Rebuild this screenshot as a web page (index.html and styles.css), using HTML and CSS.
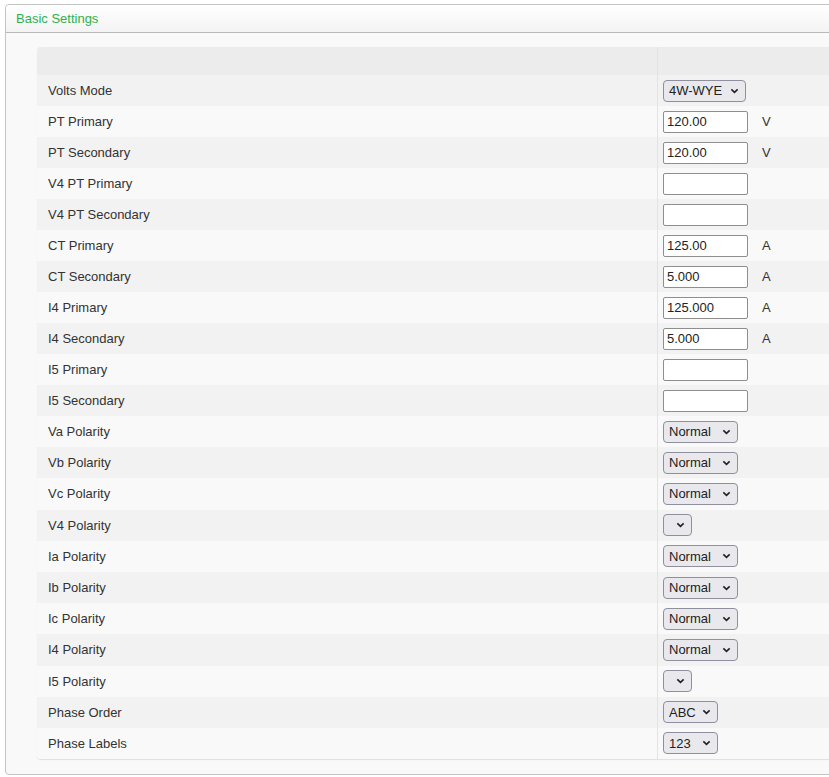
FILE: index.html
```html
<!DOCTYPE html>
<html>
<head>
<meta charset="utf-8">
<link rel="stylesheet" href="styles.css">
</head>
<body>
<div class="panel">
  <div class="panel-heading">Basic Settings</div>
  <div class="panel-body">
    <table class="settings">
      <thead><tr><th class="c1"></th><th class="c2"></th></tr></thead>
      <tbody>
        <tr><td>Volts Mode</td><td><span class="sel w83"><select><option>4W-WYE</option></select><svg viewBox="0 0 10 6"><path d="M1.5 1.2 5 4.6 8.5 1.2"/></svg></span></td></tr>
        <tr><td>PT Primary</td><td><input class="inp" value="120.00"><span class="unit">V</span></td></tr>
        <tr><td>PT Secondary</td><td><input class="inp" value="120.00"><span class="unit">V</span></td></tr>
        <tr><td>V4 PT Primary</td><td><input class="inp" value=""></td></tr>
        <tr><td>V4 PT Secondary</td><td><input class="inp" value=""></td></tr>
        <tr><td>CT Primary</td><td><input class="inp" value="125.00"><span class="unit">A</span></td></tr>
        <tr><td>CT Secondary</td><td><input class="inp" value="5.000"><span class="unit">A</span></td></tr>
        <tr><td>I4 Primary</td><td><input class="inp" value="125.000"><span class="unit">A</span></td></tr>
        <tr><td>I4 Secondary</td><td><input class="inp" value="5.000"><span class="unit">A</span></td></tr>
        <tr><td>I5 Primary</td><td><input class="inp" value=""></td></tr>
        <tr><td>I5 Secondary</td><td><input class="inp" value=""></td></tr>
        <tr><td>Va Polarity</td><td><span class="sel w75"><select><option>Normal</option></select><svg viewBox="0 0 10 6"><path d="M1.5 1.2 5 4.6 8.5 1.2"/></svg></span></td></tr>
        <tr><td>Vb Polarity</td><td><span class="sel w75"><select><option>Normal</option></select><svg viewBox="0 0 10 6"><path d="M1.5 1.2 5 4.6 8.5 1.2"/></svg></span></td></tr>
        <tr><td>Vc Polarity</td><td><span class="sel w75"><select><option>Normal</option></select><svg viewBox="0 0 10 6"><path d="M1.5 1.2 5 4.6 8.5 1.2"/></svg></span></td></tr>
        <tr><td>V4 Polarity</td><td><span class="sel w29"><select><option></option></select><svg viewBox="0 0 10 6"><path d="M1.5 1.2 5 4.6 8.5 1.2"/></svg></span></td></tr>
        <tr><td>Ia Polarity</td><td><span class="sel w75"><select><option>Normal</option></select><svg viewBox="0 0 10 6"><path d="M1.5 1.2 5 4.6 8.5 1.2"/></svg></span></td></tr>
        <tr><td>Ib Polarity</td><td><span class="sel w75"><select><option>Normal</option></select><svg viewBox="0 0 10 6"><path d="M1.5 1.2 5 4.6 8.5 1.2"/></svg></span></td></tr>
        <tr><td>Ic Polarity</td><td><span class="sel w75"><select><option>Normal</option></select><svg viewBox="0 0 10 6"><path d="M1.5 1.2 5 4.6 8.5 1.2"/></svg></span></td></tr>
        <tr><td>I4 Polarity</td><td><span class="sel w75"><select><option>Normal</option></select><svg viewBox="0 0 10 6"><path d="M1.5 1.2 5 4.6 8.5 1.2"/></svg></span></td></tr>
        <tr><td>I5 Polarity</td><td><span class="sel w29"><select><option></option></select><svg viewBox="0 0 10 6"><path d="M1.5 1.2 5 4.6 8.5 1.2"/></svg></span></td></tr>
        <tr><td>Phase Order</td><td><span class="sel w55"><select><option>ABC</option></select><svg viewBox="0 0 10 6"><path d="M1.5 1.2 5 4.6 8.5 1.2"/></svg></span></td></tr>
        <tr><td>Phase Labels</td><td><span class="sel w55"><select><option>123</option></select><svg viewBox="0 0 10 6"><path d="M1.5 1.2 5 4.6 8.5 1.2"/></svg></span></td></tr>
      </tbody>
    </table>
  </div>
</div>
</body>
</html>
```
FILE: styles.css
```css
html, body {
  margin: 0;
  padding: 0;
  overflow: hidden;
  background: #ffffff;
}
body {
  font-family: "Liberation Sans", Arial, sans-serif;
  font-size: 13px;
  color: #333333;
}
.panel {
  margin: 4px 0 0 5px;
  width: 900px;
  height: 771px;
  box-sizing: border-box;
  border: 1px solid #c4c4c4;
  border-radius: 4px;
  background: #f9f9f9;
  display: flex;
  flex-direction: column;
}
.panel-heading {
  height: 27px;
  line-height: 27px;
  padding-left: 10px;
  color: #2fb14e;
  font-size: 13px;
  background: linear-gradient(#ffffff, #f3f3f3);
  border-bottom: 1px solid #b9b9b9;
  border-radius: 4px 4px 0 0;
}
.panel-body {
  padding: 14px 0 0 31px;
}
.settings {
  width: 850px;
  border-collapse: separate;
  border-spacing: 0;
  border-radius: 4px;
  overflow: hidden;
  box-shadow: 0 1px 1px rgba(0,0,0,0.10);
  font-size: 13px;
}
.settings th {
  height: 28px;
  padding: 0;
  background: #ececec;
}
.settings th.c1 { width: 620px; }
.settings th.c2 { border-left: 1px solid #e3e3e3; }
.settings td {
  height: 31px;
  padding: 0 0 0 11px;
  box-sizing: border-box;
  vertical-align: middle;
  color: #333333;
}
.settings tbody tr:nth-child(n+12) td { height: 31.2px; }
.settings td + td {
  padding-left: 5px;
  border-left: 1px solid #e3e3e3;
}
.settings tbody tr:nth-child(odd) td { background: #f2f2f2; }
.settings tbody tr:nth-child(even) td { background: #f9f9f9; }
.inp {
  display: inline-block;
  vertical-align: middle;
  width: 85px;
  height: 22px;
  box-sizing: border-box;
  border: 1px solid #8e8e8e;
  border-radius: 2px;
  padding: 0 3px;
  font-family: "Liberation Sans", Arial, sans-serif;
  font-size: 13px;
  color: #222222;
  background: #ffffff;
}
.unit {
  display: inline-block;
  vertical-align: middle;
  margin-left: 14px;
  color: #333333;
}
.sel {
  position: relative;
  display: inline-block;
  vertical-align: middle;
  height: 22px;
}
.sel select {
  appearance: none;
  -webkit-appearance: none;
  width: 100%;
  height: 22px;
  box-sizing: border-box;
  border: 1px solid #8f8f9d;
  border-radius: 4px;
  background: #e9e9ed;
  padding: 0 0 0 5px;
  font-family: "Liberation Sans", Arial, sans-serif;
  font-size: 13px;
  color: #222222;
  display: block;
}
.sel svg {
  position: absolute;
  right: 7px;
  top: 8px;
  width: 9px;
  height: 6px;
  fill: none;
  stroke: #222222;
  stroke-width: 1.8;
  pointer-events: none;
}
.w83 { width: 83px; }
.w75 { width: 75px; }
.w55 { width: 55px; }
.w29 { width: 29px; }
```
